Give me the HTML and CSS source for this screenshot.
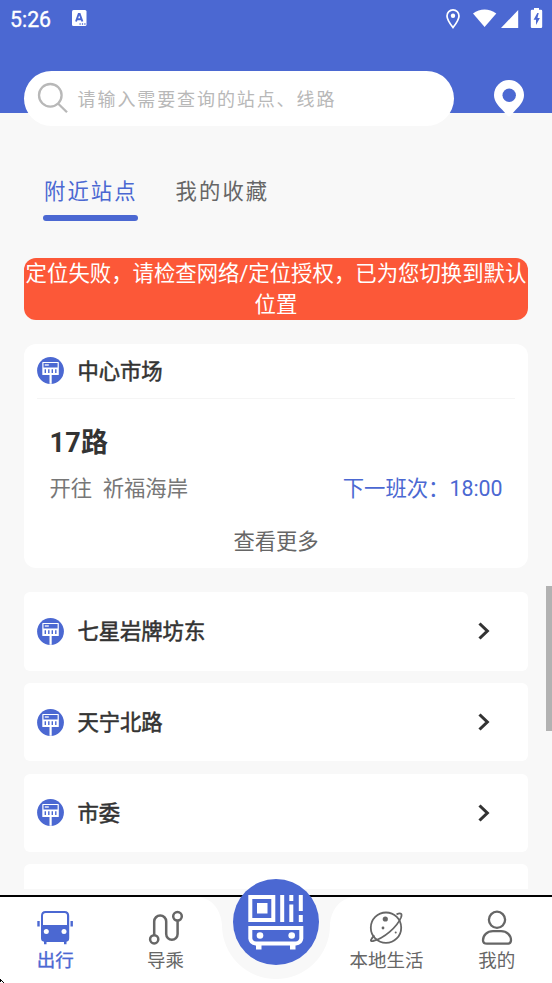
FILE: index.html
```html
<!DOCTYPE html>
<html lang="zh-CN">
<head>
<meta charset="utf-8">
<title>出行</title>
<link rel="stylesheet" href="styles.css">
</head>
<body>
<svg class="defs" aria-hidden="true">
  <symbol id="stop" viewBox="0 0 27 27">
    <circle cx="13.5" cy="13.5" r="13.4" fill="#4b68d2"/>
    <path d="M5.900 5.500h15.300v12H5.900z" fill="#4b68d2" stroke="#fff" stroke-width="1.200" stroke-linejoin="round"/>
    <path d="M6 10.500h15v6.800H6z" fill="#fff"/>
    <path d="M7.800 8h4" stroke="#fff" stroke-width="1.300"/>
    <path d="M8.300 12.200v3.800M11.800 12.200v3.800M15.300 12.200v3.800M18.800 12.200v3.800" stroke="#4b68d2" stroke-width="1.400"/>
    <path d="M13.600 17v9.800" stroke="#fff" stroke-width="2.200"/>
  </symbol>
  <symbol id="chevron" viewBox="0 0 12 18">
    <path d="M1.500 1.500 9.300 9l-7.800 7.500" fill="none" stroke="#333" stroke-width="3.100"/>
  </symbol>
</svg>
<div class="screen">
  <header class="header">
    <div class="status">
      <span class="clock">5:26</span>
      <svg class="badge-a" width="15" height="16" viewBox="0 0 15 16"><rect width="14.500" height="16" rx="1.500" fill="#fff"/><path d="m4 11.500 2.700-7.500h1l2.700 7.500M5.200 9.200h4.200" fill="none" stroke="#4b68d2" stroke-width="1.900"/><path d="M7.500 14h1.200m1.200 0h1.200m1.200 0h1.200" stroke="#4b68d2" stroke-width="1.300"/></svg>
      <svg class="status-icons" width="98" height="22" viewBox="0 0 98 22">
        <path d="M8 20.500C4.500 16 2 12.500 2 8.900a6 6 0 0 1 12 0c0 3.600-2.500 7.100-6 11.600z" fill="none" stroke="#fff" stroke-width="1.700"/><circle cx="8" cy="8.700" r="2.200" fill="#fff"/>
        <path d="M28 6.500C35 1.200 44 1.200 51.300 6.500L39.600 20z" fill="#fff"/>
        <path d="M73.200 3v18H56z" fill="#fff"/>
        <path d="M89 1h5v1.800h2a1.200 1.200 0 0 1 1.200 1.200v15.800a1.200 1.200 0 0 1-1.200 1.200h-9a1.200 1.200 0 0 1-1.200-1.200V4A1.200 1.200 0 0 1 87 2.800h2z" fill="#fff"/>
        <path d="M92.300 6 88.600 12.700h2.400V18l3.900-7h-2.400l1.200-5z" fill="#4b68d2"/>
      </svg>
    </div>
    <div class="search-row">
      <div class="search">
        <svg width="32" height="32" viewBox="0 0 32 32" fill="none" stroke="#b8b8b8" stroke-width="2.300"><circle cx="13.300" cy="13.300" r="11.300"/><path d="m21 21.500 9 8.800"/></svg>
        <span>请输入需要查询的站点、线路</span>
      </div>
      <svg class="pin" width="30" height="37" viewBox="0 0 30 37"><path d="M15 0a15 15 0 0 1 15 15c0 6-4 10.500-8 14.500l-5.300 6a2.300 2.300 0 0 1-3.400 0L8 29.500C4 25.500 0 21 0 15A15 15 0 0 1 15 0z" fill="#fff"/><circle cx="15.200" cy="15.200" r="6.700" fill="#4b68d2"/></svg>
    </div>
  </header>
  <nav class="tabs"><span class="tab tab-on">附近站点</span><span class="tab">我的收藏</span></nav>
  <main class="content">
    <div class="alert">定位失败，请检查网络/定位授权，已为您切换到默认位置</div>
    <section class="card">
      <div class="card-head"><svg class="stop"><use href="#stop"/></svg><h2 class="name">中心市场</h2></div>
      <div class="route">17路</div>
      <div class="trip"><span>开往&nbsp; 祈福海岸</span><span class="next">下一班次：18:00</span></div>
      <div class="more">查看更多</div>
    </section>
    <div class="stops">
      <div class="row"><svg class="stop"><use href="#stop"/></svg><h2 class="name">七星岩牌坊东</h2><svg class="chev"><use href="#chevron"/></svg></div>
      <div class="row"><svg class="stop"><use href="#stop"/></svg><h2 class="name">天宁北路</h2><svg class="chev"><use href="#chevron"/></svg></div>
      <div class="row"><svg class="stop"><use href="#stop"/></svg><h2 class="name">市委</h2><svg class="chev"><use href="#chevron"/></svg></div>
      <div class="row"></div>
    </div>
  </main>
  <div class="scrollbar"></div>
  <footer class="tabbar">
    <svg class="notch" width="156" height="86" viewBox="0 0 156 86"><path d="M0 0C14 1 23 13 24 28a54 54 0 0 0 108 0C133 13 142 1 156 0z" fill="#f8f8f8"/></svg>
    <div class="item item-on">
      <svg width="36" height="36" viewBox="0 0 36 36"><path d="M8.500 1h19q4.700 0 4.700 4.700v22.500q0 3-2.700 3.500v2.500H27V32H9.500v2.200H7v-2.500q-3-.5-3-3.500V5.700Q4 1 8.500 1z" fill="#4b68d2"/><path d="M8.800 3h18.700q2.500 0 2.500 2.500v9.500H6V5.500Q6 3 8.800 3z" fill="#fff"/><circle cx="9.300" cy="21.500" r="2.500" fill="#fff"/><circle cx="27" cy="21.500" r="2.500" fill="#fff"/><path d="M1.500 11v5.500M34.700 11v5.500" stroke="#4b68d2" stroke-width="2.400"/></svg>
      <span>出行</span>
    </div>
    <div class="item">
      <svg width="36" height="36" viewBox="0 0 36 36" fill="none" stroke="#666" stroke-width="2.500"><circle cx="6.200" cy="29.300" r="4.100"/><circle cx="29.500" cy="6.300" r="4.300"/><path d="M6.200 25V11.500a6 6 0 0 1 12 0v12.500a5.700 5.700 0 0 0 11.400 0V11"/></svg>
      <span>导乘</span>
    </div>
    <div class="scan">
      <svg width="86" height="86" viewBox="0 0 86 86"><circle cx="43" cy="43" r="43" fill="#4b68d2"/>
        <g fill="none" stroke="#fff" stroke-width="4"><path d="M17.300 18h23v23h-23z"/><path d="M49.200 16v27M58.300 16v6M58.300 25.500V43M67.800 16v16M67.800 36v7"/><path d="M17.300 49h51v10.500q-.5 4.500-5.500 5H22.800q-5-.5-5.500-5z"/></g>
        <path d="M24 24h10.500v10.500H24zM23 65h5.500v5.500H23zM57 65h5.500v5.500H57z" fill="#fff"/><circle cx="27" cy="56.500" r="3.300" fill="#fff"/><circle cx="58.700" cy="56.500" r="3.300" fill="#fff"/></svg>
    </div>
    <div class="item">
      <svg width="36" height="36" viewBox="0 0 36 36" fill="none" stroke="#666" stroke-width="1.800"><circle cx="18" cy="17.700" r="15.200"/><path d="M6.500 25.500C2.500 29 1.500 32 5 31 16 28.500 29 17 33 7.500c1.500-4 0-5-4.500-3.200" /><circle cx="17.300" cy="9" r="2.600" fill="#666" stroke="none"/><circle cx="15" cy="18" r="1.400" fill="#666" stroke="none"/><circle cx="27.700" cy="22.500" r="1" fill="#666" stroke="none"/></svg>
      <span>本地生活</span>
    </div>
    <div class="item">
      <svg width="36" height="36" viewBox="0 0 36 36" fill="none" stroke="#666" stroke-width="2.300"><circle cx="18" cy="9.800" r="8.100"/><path d="M14 21.200h8c6 0 10 4 10 9q0 3.500-4 3.500H8q-4 0-4-3.500c0-5 4-9 10-9z"/></svg>
      <span>我的</span>
    </div>
    <svg class="pointer" width="4" height="4" viewBox="0 0 4 4"><path d="M0 0h1v1h1v1h1v1h1v1H3V3H2V2H1v1H0z"/></svg>
  </footer>
</div>
</body>
</html>
```
FILE: styles.css
```css
* { box-sizing: border-box; }
body { margin: 0; background: #f8f8f8; font-family: Roboto, "Noto Sans CJK SC", sans-serif; color: #333; }
.defs { position: absolute; width: 0; height: 0; }
svg { display: block; flex: none; }
.screen { position: relative; display: flex; flex-direction: column; width: 552px; height: 983px; overflow: hidden; }

.header { height: 113px; background: #4b68d2; flex: none; }
.status { display: flex; align-items: flex-start; height: 70.5px; padding: 7px 9px 0 10px; }
.clock { color: #fff; font-size: 21.3px; line-height: 25px; -webkit-text-stroke: .35px #fff; width: 62px; }
.badge-a { margin-top: 3px; }
.status-icons { margin-left: auto; }
.search-row { display: flex; align-items: flex-start; padding: 0 28px 0 24.4px; }
.search { display: flex; align-items: center; width: 429.6px; height: 55.5px; padding-left: 13px; border-radius: 28px; background: #fff; color: #b8b8b8; font-size: 18px; letter-spacing: 1.9px; }
.search span { margin-left: 8.2px; }
.pin { margin: 9px 0 0 auto; }

.tabs { display: flex; flex: none; gap: 37px; height: 145px; padding: 59px 0 0 43px; }
.tab { position: relative; height: 49px; line-height: 40px; font-size: 21.3px; letter-spacing: 2.1px; color: #666; padding-left: 1px; }
.tab-on { color: #4b68d2; }
.tab-on::after { content: ""; position: absolute; left: 0; right: 0; top: 43px; height: 6px; border-radius: 3px; background: #4b68d2; }

.content { flex: none; height: 631px; padding: 0 24.4px; overflow: hidden; }
.alert { height: 61.5px; border-radius: 12px; background: #fc5838; color: #fff; font-size: 21.4px; line-height: 31px; text-align: center; }
.card { height: 224px; margin: 24.4px 0 24.3px; border-radius: 12px; background: #fff; padding: 0 13px; }
.card-head { display: flex; align-items: center; height: 55px; border-bottom: 1px solid #f5f5f5; }
.stop { width: 27px; height: 27px; }
.name { margin: 2px 0 0 13px; font-size: 21.3px; line-height: 30px; font-weight: 400; -webkit-text-stroke: .55px #333; }
.route { height: 69px; padding: 24px 12px 0; font-size: 27px; letter-spacing: .3px; line-height: 40px; font-weight: 700; }
.trip { display: flex; justify-content: space-between; padding: 5px 12px 0; font-size: 21.35px; line-height: 32px; color: #777; }
.next { color: #4b68d2; }
.more { margin-top: 21px; text-align: center; font-size: 21.3px; line-height: 32px; color: #666; }
.stops { display: flex; flex-direction: column; gap: 12.2px; }
.row { display: flex; align-items: center; height: 78.5px; border-radius: 6px; background: #fff; padding: 0 38px 0 13px; }
.chev { width: 12px; height: 18px; margin-left: auto; }

.scrollbar { position: absolute; right: 0; top: 586px; width: 6px; height: 145px; background: #b2b2b2; }

.tabbar { position: relative; display: grid; grid-template-columns: repeat(5, 1fr); flex: none; height: 88px; margin-top: 6px; border-top: 2px solid #000; background: #fff; }
.item { display: flex; flex-direction: column; align-items: center; padding-top: 13px; font-size: 18.5px; line-height: 31px; color: #666; position: relative; }
.item span { white-space: nowrap; }
.item-on { color: #4b68d2; }
.item-on span { -webkit-text-stroke: .35px #4b68d2; }
.notch { position: absolute; left: 198px; top: 0; }
.scan { position: relative; justify-self: center; margin-top: -18px; }
.pointer { position: absolute; left: 0; bottom: 0; }
```
